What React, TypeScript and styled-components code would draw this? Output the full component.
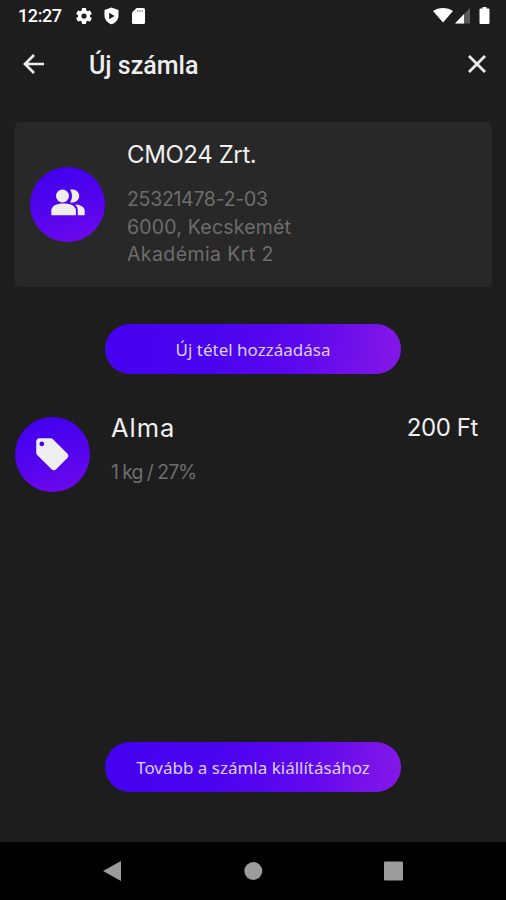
import React from 'react';
import styled, { createGlobalStyle } from 'styled-components';

const GlobalStyle = createGlobalStyle`
  * { box-sizing: border-box; }
  body { margin: 0; background: #1d1d1d; }
`;

const Screen = styled.div`
  display: flex;
  flex-direction: column;
  width: 506px;
  height: 900px;
  overflow: hidden;
  background: #1d1d1d;
  color: #f0f0f0;
  font-family: Inter, "Liberation Sans", sans-serif;
`;

const StatusBar = styled.div`
  display: flex;
  align-items: center;
  height: 32px;
  padding: 0 15px 0 18px;
  color: #fff;
`;

const Clock = styled.span`
  width: 56px;
  font: 500 18px/32px Roboto, sans-serif;
  letter-spacing: -0.4px;
`;

const StatusIcons = styled.div<{ $gap: number }>`
  display: flex;
  align-items: center;
  gap: ${(p) => p.$gap}px;
`;

const Spacer = styled.div`
  flex: 1;
`;

const Icon = styled.svg`
  display: block;
  flex: none;
`;

const AppBar = styled.header`
  display: flex;
  align-items: center;
  height: 68px;
  padding: 0 19px 4px 22px;
`;

const Title = styled.h1`
  flex: 1;
  margin: 0 0 0 43px;
  padding-top: 4px;
  font: 500 25px/32px Roboto, sans-serif;
  color: #eee;
`;

const Content = styled.main`
  display: flex;
  flex: 1;
  flex-direction: column;
  padding: 22px 14px 50px 15px;
`;

const ClientCard = styled.section`
  display: flex;
  align-items: center;
  height: 165px;
  padding-left: 15px;
  border-radius: 5px;
  background: #282828;
`;

const Avatar = styled.div<{ $lift?: number }>`
  display: flex;
  flex: none;
  align-items: center;
  justify-content: center;
  width: 75px;
  height: 75px;
  padding-bottom: ${(p) => p.$lift ?? 0}px;
  border-radius: 50%;
  background: linear-gradient(165deg, #4400ef 10%, #5404ee 55%, #7309ec 100%);
`;

const Details = styled.div`
  flex: 1;
  align-self: flex-start;
  padding: 17px 0 0 22px;
`;

const ItemDetails = styled(Details)`
  padding: 0 0 0 21px;
  margin-top: -5px;
`;

const Heading = styled.div<{ $spacing: number; $size?: number }>`
  font-size: ${(p) => p.$size ?? 24}px;
  line-height: 32px;
  letter-spacing: ${(p) => p.$spacing}px;
  white-space: nowrap;
`;

const Muted = styled.div<{ $spacing: number }>`
  font-size: 19.5px;
  line-height: 27.5px;
  letter-spacing: ${(p) => p.$spacing}px;
  color: #6d6d6d;
  white-space: nowrap;
`;

const Lines = styled.div`
  margin-top: 15px;
`;

const PillButton = styled.button`
  align-self: center;
  flex: none;
  width: 296px;
  height: 50px;
  margin-right: 1px;
  padding: 1px 0 0;
  border: 0;
  border-radius: 25px;
  background: linear-gradient(100deg, #4502f0 0%, #4a03ef 35%, #5c07ed 65%, #8618e8 100%);
  color: #dcd0ff;
  font: 400 17px/49px "Noto Sans", sans-serif;
`;

const AddRow = styled.div`
  display: flex;
  flex-direction: column;
  margin: 37px 0 43px;
`;

const Item = styled.section`
  display: flex;
  height: 75px;
`;

const Price = styled(Heading)`
  margin: -5px 14px 0 0;
`;

const NavBar = styled.nav`
  display: flex;
  align-items: center;
  justify-content: space-between;
  height: 58px;
  padding: 0 102px;
  background: #000;
`;

export default function App() {
  return (
    <>
      <GlobalStyle />
      <Screen>
        <StatusBar>
          <Clock>12:27</Clock>
          <StatusIcons $gap={9}>
            <Icon width="20" height="20" viewBox="0 0 24 24" fill="#fff">
              <path d="M19.14 12.94c.04-.3.06-.61.06-.94 0-.32-.02-.64-.07-.94l2.03-1.58c.18-.14.23-.41.12-.61l-1.92-3.32c-.12-.22-.37-.29-.59-.22l-2.39.96c-.5-.38-1.03-.7-1.62-.94l-.36-2.54c-.04-.24-.24-.41-.48-.41h-3.84c-.24 0-.43.17-.47.41l-.36 2.54c-.59.24-1.13.57-1.62.94l-2.39-.96c-.22-.08-.47 0-.59.22L2.74 8.87c-.12.21-.08.47.12.61l2.03 1.58c-.05.3-.09.63-.09.94s.02.64.07.94l-2.03 1.58c-.18.14-.23.41-.12.61l1.92 3.32c.12.22.37.29.59.22l2.39-.96c.5.38 1.03.7 1.62.94l.36 2.54c.05.24.24.41.48.41h3.84c.24 0 .44-.17.47-.41l.36-2.54c.59-.24 1.13-.56 1.62-.94l2.39.96c.22.08.47 0 .59-.22l1.92-3.32c.12-.22.07-.47-.12-.61l-2.01-1.58zM12 15.1A3.1 3.1 0 1 1 12 8.9a3.1 3.1 0 0 1 0 6.2z" />
            </Icon>
            <Icon width="17" height="18" viewBox="0 0 17 18">
              <path fill="#fff" d="M8.500.5 15.500 3v5.500c0 4-3 7.500-7 8.700-4-1.200-7-4.700-7-8.700V3z" />
              <path fill="#1d1d1d" d="M6.200 5.800 11.600 9l-5.400 3.200z" />
            </Icon>
            <Icon width="20" height="18" viewBox="-1 0 20 18">
              <path fill="#fff" d="M6.500 1h7a1.500 1.500 0 0 1 1.500 1.500v13a1.500 1.500 0 0 1-1.500 1.500h-10A1.500 1.500 0 0 1 2 15.500V5.500z" />
              <path stroke="#999" strokeWidth="1.200" d="M7.500 3v2M9.800 3v2M12.100 3v2" />
            </Icon>
          </StatusIcons>
          <Spacer />
          <StatusIcons $gap={2}>
            <Icon width="20" height="18" viewBox="0 0 20 18" fill="#fff">
              <path d="M0 4C5.500 0 14.500 0 20 4L10 15.500z" />
            </Icon>
            <Icon width="15" height="18" viewBox="0 0 15 18">
              <path fill="#5a5a5a" d="M0 16.500 15 1v15.500z" />
              <path fill="#fff" d="M0 16.500 9 7v9.500z" />
            </Icon>
            <Icon width="19" height="18" viewBox="0 0 19 18" fill="#fff">
              <path d="M10.500 0h4v1.500h2a1 1 0 0 1 1 1V16a1 1 0 0 1-1 1h-8a1 1 0 0 1-1-1V2.500a1 1 0 0 1 1-1h2z" />
            </Icon>
          </StatusIcons>
        </StatusBar>

        <AppBar>
          <Icon width="24" height="22" viewBox="0 0 24 22" fill="none" stroke="#eee" strokeWidth="2.700">
            <path d="M22 11H4M12 2 3 11l9 9" />
          </Icon>
          <Title>Új számla</Title>
          <Icon width="20" height="20" viewBox="0 0 20 20" fill="none" stroke="#eee" strokeWidth="2.800">
            <path d="m2 2 16 16M18 2 2 18" />
          </Icon>
        </AppBar>

        <Content>
          <ClientCard>
            <Avatar $lift={5}>
              <Icon width="34" height="27" viewBox="0 0 34 27" fill="#eee">
                <circle cx="11.500" cy="7" r="6.500" />
                <path d="M.3 26.300v-4.500c0-4.800 5-7.300 12.300-7.300s12.300 2.500 12.300 7.300v4.500z" />
                <path d="M19 .6c5-1 9.200 1.900 9.200 6.400s-4.200 7.400-9.200 6.400c2.600-3.900 2.600-8.900 0-12.800z" />
                <path d="M26.800 26.300v-4.500c0-2.600-.9-4.700-2.800-6.300 6.200.2 9.700 2.800 9.700 6.300v4.500z" />
              </Icon>
            </Avatar>
            <Details>
              <Heading $spacing={-0.4}>CMO24 Zrt.</Heading>
              <Lines>
                <Muted $spacing={-0.3}>25321478-2-03</Muted>
                <Muted $spacing={0.2}>6000, Kecskemét</Muted>
                <Muted $spacing={0.4}>Akadémia Krt 2</Muted>
              </Lines>
            </Details>
          </ClientCard>

          <AddRow>
            <PillButton>Új tétel hozzáadása</PillButton>
          </AddRow>

          <Item>
            <Avatar>
              <Icon width="38.500" height="38.500" viewBox="0 0 24 24" fill="#eee">
                <path d="m21.410 11.580-9-9C12.050 2.220 11.550 2 11 2H4c-1.100 0-2 .9-2 2v7c0 .55.22 1.050.59 1.420l9 9c.36.36.86.58 1.410.58.55 0 1.050-.22 1.410-.59l7-7c.37-.36.59-.86.59-1.410 0-.55-.23-1.060-.59-1.420zM5.500 7C4.670 7 4 6.330 4 5.500S4.670 4 5.500 4 7 4.670 7 5.500 6.330 7 5.500 7z" />
              </Icon>
            </Avatar>
            <ItemDetails>
              <Heading $spacing={1} $size={25.5}>Alma</Heading>
              <Lines>
                <Muted $spacing={-1.05}>1 kg / 27%</Muted>
              </Lines>
            </ItemDetails>
            <Price $spacing={-0.4}>200 Ft</Price>
          </Item>

          <Spacer />
          <PillButton>Tovább a számla kiállításához</PillButton>
        </Content>

        <NavBar>
          <Icon width="20" height="22" viewBox="0 0 20 22" fill="#9c9c9c">
            <path d="M1 11 19 1v20z" />
          </Icon>
          <Icon width="20" height="20" viewBox="0 0 20 20" fill="#9c9c9c">
            <circle cx="10.300" cy="10" r="9" />
          </Icon>
          <Icon width="20" height="20" viewBox="0 0 20 20" fill="#9c9c9c">
            <rect x="0" y="0.500" width="19" height="19" rx="1" />
          </Icon>
        </NavBar>
      </Screen>
    </>
  );
}
